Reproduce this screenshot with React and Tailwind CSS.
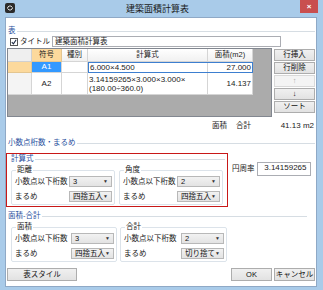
import React from 'react';

const jp = "font-['Liberation_Sans','Noto_Sans_CJK_JP',sans-serif]";

function GroupHead({ label, className = '' }) {
  return (
    <div className={`flex items-center h-[10px] ${className}`}>
      <span className="text-[7.5px] text-[#1f4f9e] leading-none">{label}</span>
      <div className="flex-1 h-px bg-[#d6dde3] ml-[1px]"></div>
    </div>
  );
}

function Select({ value, w = 'w-[43px]' }) {
  return (
    <div className={`${w} shrink-0 h-[11px] border border-[#b8b8b8] bg-gradient-to-b from-[#f2f2f2] to-[#e3e3e3] flex items-center pl-[3px] pr-[3px]`}>
      <span className="flex-1 text-[7.5px] leading-none text-[#111] whitespace-nowrap">{value}</span>
      <span className="text-[5px] leading-none text-[#333]">▼</span>
    </div>
  );
}

function Row({ label, value, className = '' }) {
  return (
    <div className={`flex items-center h-[11px] ${className}`}>
      <span className="flex-1 text-[7.5px] leading-none text-[#222] whitespace-nowrap">{label}</span>
      <Select value={value} />
    </div>
  );
}

function Group({ title, w, digits, round }) {
  return (
    <fieldset className={`${w} border border-[#dce3ea] rounded-[2px] pl-[3px] pr-[2px] pb-[2px]`}>
      <legend className="text-[7.5px] leading-[10px] text-[#222] px-[1px] ml-[1px]">{title}</legend>
      <Row label="小数点以下桁数" value={digits} className="mt-[1px]" />
      <Row label="まるめ" value={round} className="mt-[4px]" />
    </fieldset>
  );
}

function Btn({ children, className = '', disabled }) {
  return (
    <div
      className={`flex items-center justify-center text-[7.5px] leading-none border ${
        disabled
          ? 'border-[#d9d9d9] bg-[#f4f4f4] text-[#a8a8a8]'
          : 'border-[#adadad] bg-gradient-to-b from-[#f0f0f0] to-[#e2e2e2] text-[#111]'
      } ${className}`}
    >
      {children}
    </div>
  );
}

export default function App() {
  return (
    <div className={`w-[323px] h-[290px] bg-[#a9cbe9] flex flex-col ${jp} text-[#222]`}>
      {/* タイトルバー */}
      <div className="h-[17px] flex items-start">
        <div className="ml-[5px] mt-[3px] w-[10px] h-[10px] rounded-[2px] bg-[#2b2b2b] flex items-center justify-center">
          <svg width="8" height="8" viewBox="0 0 8 8">
            <path d="M1.5 4.5a2.5 2.5 0 0 1 4.6-1.4M6.5 3.5a2.5 2.5 0 0 1-4.6 1.4" stroke="#e8e8e8" strokeWidth="1" fill="none" />
          </svg>
        </div>
        <div className="flex-1 text-center text-[9px] leading-[18px] text-[#1b1b1b]">建築面積計算表</div>
        <div className="mr-[5px] w-[18px] h-[13px] bg-[#c94f4f] flex items-center justify-center text-white text-[8px] font-bold leading-none">
          ×
        </div>
      </div>

      {/* クライアント */}
      <div className="ml-[5px] w-[312px] h-[270px] bg-white border border-[#8fa9c6] flex flex-col">
        <GroupHead label="表" className="mt-[8px] ml-[2px] mr-[1px]" />

        <div className="flex items-center h-[11px] ml-[4px]">
          <div className="w-[8px] h-[8px] border border-[#555] bg-white flex items-center justify-center">
            <svg width="6" height="6" viewBox="0 0 6 6">
              <path d="M0.8 3.2 L2.4 4.8 L5.2 0.8" stroke="#1d2a44" strokeWidth="1.1" fill="none" />
            </svg>
          </div>
          <span className="ml-[2px] text-[7.5px] leading-none">タイトル</span>
          <div className="ml-[2px] w-[229px] h-[11px] border border-[#abadb3] flex items-center pl-[2px] text-[7.5px] leading-none">
            建築面積計算表
          </div>
        </div>

        <div className="flex mt-[1px] h-[69px]">
          {/* テーブル */}
          <div className="ml-[1px] w-[265px] h-[69px] border border-[#828790] bg-[#ababab] flex flex-col items-start">
            <div className="flex h-[13px] bg-white text-[7.5px] leading-none">
              <div className="w-[24px] bg-[#efefef] border-r border-b border-[#d0d0d0]"></div>
              <div className="w-[30px] bg-[#fcd99c] border-r border-b border-[#e4c690] flex items-center justify-center">符号</div>
              <div className="w-[26px] bg-gradient-to-b from-white to-[#f1f1f1] border-r border-b border-[#d5d5d5] flex items-center justify-center">種別</div>
              <div className="w-[120px] bg-gradient-to-b from-white to-[#f1f1f1] border-r border-b border-[#d5d5d5] flex items-center justify-center">計算式</div>
              <div className="w-[45px] bg-gradient-to-b from-white to-[#f1f1f1] border-r border-b border-[#d5d5d5] flex items-center justify-center">面積(m2)</div>
            </div>
            <div className="flex h-[11px] bg-white text-[8px] leading-none">
              <div className="w-[24px] bg-[#fcd99c] border-r border-b border-[#e4c690]"></div>
              <div className="w-[30px] bg-[#3399ff] text-white border-r border-b border-[#d5d5d5] flex items-center justify-center">A1</div>
              <div className="w-[26px] border-r border-b border-[#d5d5d5]"></div>
              <div className="flex w-[165px] border border-[#3d7fd0]">
                <div className="w-[119px] border-r border-[#d5d5d5] flex items-center pl-[1px]">6.000×4.500</div>
                <div className="flex-1 flex items-center justify-end pr-[1px]">27.000</div>
              </div>
            </div>
            <div className="flex h-[22px] bg-white text-[8px] leading-none">
              <div className="w-[24px] bg-[#f4f4f4] border-r border-b border-[#d5d5d5]"></div>
              <div className="w-[30px] border-r border-b border-[#d5d5d5] flex items-center justify-center">A2</div>
              <div className="w-[26px] border-r border-b border-[#d5d5d5]"></div>
              <div className="w-[120px] border-r border-b border-[#d5d5d5] flex flex-col justify-center pl-[1px] leading-[9px]">
                <span>3.14159265×3.000×3.000×</span>
                <span>(180.00÷360.0)</span>
              </div>
              <div className="w-[45px] border-r border-b border-[#d5d5d5] flex items-center justify-end pr-[1px]">14.137</div>
            </div>
          </div>

          {/* ボタン */}
          <div className="ml-[2px] mt-[1px] w-[41px] flex flex-col gap-[1px]">
            <Btn className="h-[12px]">行挿入</Btn>
            <Btn className="h-[12px]">行削除</Btn>
            <Btn className="h-[12px]" disabled>↑</Btn>
            <Btn className="h-[12px]">↓</Btn>
            <Btn className="h-[12px]">ソート</Btn>
          </div>
        </div>

        <div className="flex items-center h-[10px] mt-[4px] pl-[206px] text-[7.5px] leading-none">
          <span>面積</span>
          <span className="ml-[9px]">合計</span>
          <span className="ml-auto pr-[2px] text-[8px]">41.13 m2</span>
        </div>

        <GroupHead label="小数点桁数・まるめ" className="mt-[7px] ml-[2px] mr-[1px]" />

        <div className="flex mt-[5px]">
          <div className="w-[222px] h-[54px] border border-[#c81818] pl-[4px] pr-[2px]">
            <GroupHead label="計算式" />
            <div className="flex gap-[4px] mt-[1px]">
              <Group title="距離" w="w-[104px]" digits="3" round="四捨五入" />
              <Group title="角度" w="w-[104px]" digits="2" round="四捨五入" />
            </div>
          </div>
          <div className="flex items-center ml-[4px] mt-[9px] h-[14px]">
            <span className="text-[7.5px] leading-none">円周率</span>
            <div className="ml-[2px] w-[54px] h-[14px] border border-[#abadb3] flex items-start justify-end pr-[3px] pt-[1px] text-[8px] leading-none">
              3.14159265
            </div>
          </div>
        </div>

        <GroupHead label="面積-合計" className="mt-[4px] ml-[2px] mr-[9px]" />

        <div className="flex gap-[3px] ml-[5px] mt-[1px]">
          <Group title="面積" w="w-[106px]" digits="3" round="四捨五入" />
          <Group title="合計" w="w-[107px]" digits="2" round="切り捨て" />
        </div>

        <div className="flex mt-[6px] ml-[1px]">
          <Btn className="w-[70px] h-[13px]">表スタイル</Btn>
          <Btn className="ml-auto w-[41px] h-[13px]">OK</Btn>
          <Btn className="ml-[2px] mr-[1px] w-[41px] h-[13px]">キャンセル</Btn>
        </div>
      </div>
    </div>
  );
}
